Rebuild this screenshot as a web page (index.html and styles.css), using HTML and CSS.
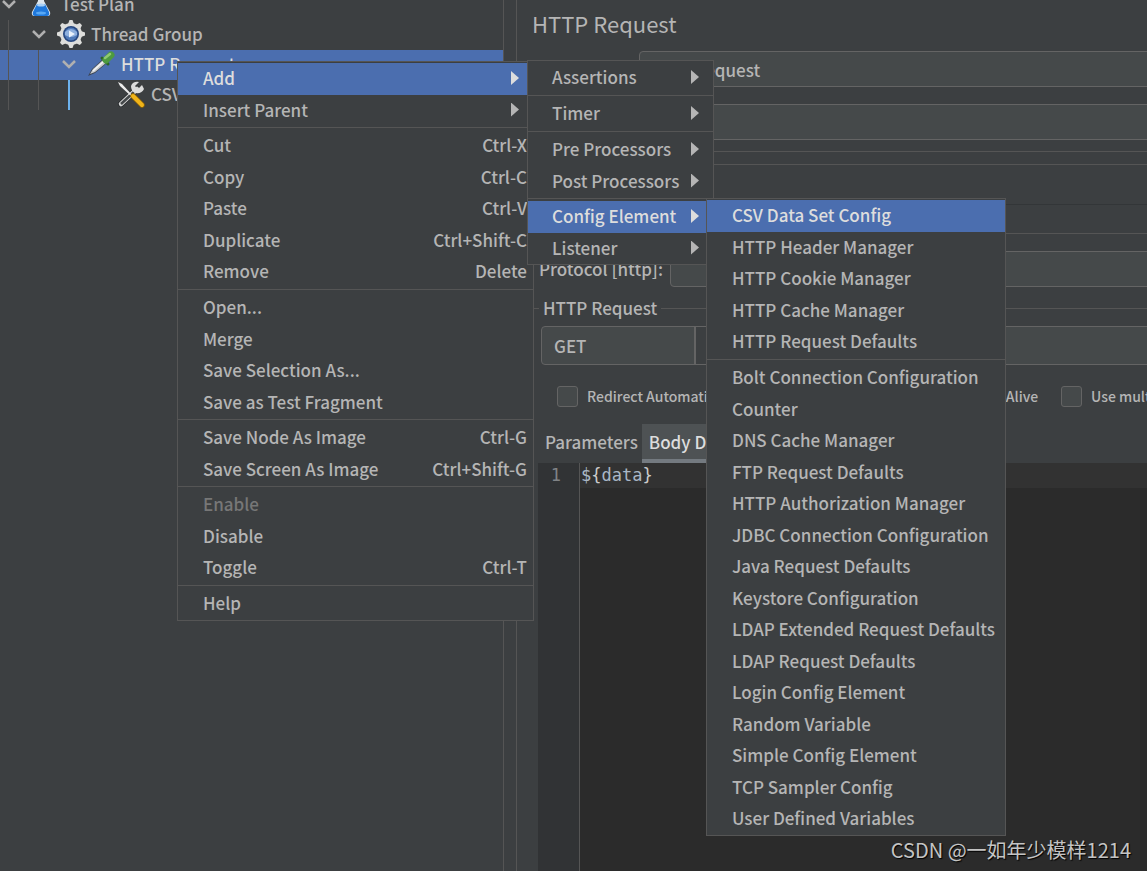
FILE: index.html
```
<!DOCTYPE html>
<html lang="en">
<head>
<meta charset="utf-8">
<title>HTTP Request</title>
<link rel="stylesheet" href="styles.css">
</head>
<body>
<div class="app">
  <nav class="tree-pane">
    <ul class="tree">
      <li class="node level-0">
        <svg class="chevron" viewBox="0 0 14 10"><path d="M1 2l6 6 6-6"/></svg>
        <svg class="node-icon" viewBox="0 0 28 28"><path d="M11 3h6v8l6 11q1 4-3 4H8q-4 0-3-4l6-11z" fill="#dce6ee"/><path d="M10 14h8l4 8q1 4-2 4H8q-3 0-2-4z" fill="#1f78dc"/><ellipse cx="14" cy="15" rx="4" ry="1.500" fill="#a9d0f5"/><ellipse cx="14" cy="23" rx="5" ry="1.500" fill="#58a8f4"/></svg>
        <span>Test Plan</span>
      </li>
      <li class="node level-1">
        <svg class="chevron" viewBox="0 0 14 10"><path d="M1 2l6 6 6-6"/></svg>
        <svg class="node-icon" viewBox="0 0 28 28"><g fill="#dededc"><circle cx="14" cy="14" r="11"/><g id="teeth"><path d="M11 4l1.500-4h3L17 4v20l-1.500 4h-3L11 24z"/><path d="M4 11l-4 1.500v3L4 17h20l4-1.500v-3L24 11z"/></g><use href="#teeth" transform="rotate(45 14 14)"/></g><circle cx="14" cy="14" r="8" fill="#27477f"/><circle cx="14" cy="14" r="6.500" fill="#4f79b8"/><path d="M8 12q6-6 12 0v3q-6 4-12 0z" fill="#8fb0de"/><path d="M12 10.500l6 3.500-6 3.500z" fill="#e9f1fb"/></svg>
        <span>Thread Group</span>
      </li>
      <li class="node level-2 selected">
        <svg class="chevron" viewBox="0 0 14 10"><path d="M1 2l6 6 6-6"/></svg>
        <svg class="node-icon" viewBox="0 0 28 28"><path d="M1 26l4-7L16 9l4 4L8 23z" fill="#3d4654"/><path d="M3 24l3-5L16 10l3 3L8 22z" fill="#c9cccf"/><path d="M6 21L17 11" stroke="#f5f5f5" stroke-width="1.500"/><path d="M15 8l6 6" stroke="#2c6427" stroke-width="3" stroke-linecap="round"/><path d="M19 10l5-5" stroke="#4d9a40" stroke-width="7" stroke-linecap="round"/><path d="M18 8l5-4" stroke="#8fc973" stroke-width="2.500" stroke-linecap="round"/></svg>
        <span>HTTP Request</span>
      </li>
      <li class="node level-3">
        <svg class="node-icon" viewBox="0 0 28 28"><path d="M4 24L20 9" stroke="#25282a" stroke-width="6" stroke-linecap="round"/><path d="M4 24L20 9" stroke="#d3d4d4" stroke-width="4.500" stroke-linecap="round"/><path d="M4 24L17 12" stroke="#44484a" stroke-width="2.500"/><path d="M25 5l-4 4-3-3 4-4q-6-1-8 4 0 5 4 7 7 1 9-4z" fill="#dcdcdc"/><path d="M1 2l4 2 11 12-1 1L3 6z" fill="#ececec"/><path d="M16 16l9 9" stroke="#8a6207" stroke-width="5.500" stroke-linecap="round"/><path d="M16 16l9 9" stroke="#f0b41a" stroke-width="4" stroke-linecap="round"/></svg>
        <span>CSV Data Set Config</span>
      </li>
    </ul>
  </nav>

  <main class="editor-pane">
    <h1 class="title">HTTP Request</h1>
    <input class="field name-field" aria-label="Name" value="HTTP Request">
    <input class="field comment-field" aria-label="Comments">
    <section class="config">
      <div class="config-tabs"></div>
      <div class="server">
        <label class="server-row"><span>Protocol [http]:</span><input class="field"></label>
      </div>
      <fieldset class="request">
        <legend>HTTP Request</legend>
        <div class="method-row">
          <select class="method" aria-label="Method"><option>GET</option></select>
          <input class="field path" aria-label="Path">
        </div>
        <div class="options">
          <label class="option"><input type="checkbox" class="check">Redirect Automatically</label>
          <label class="option keep-alive"><input type="checkbox" class="check">Use KeepAlive</label>
          <label class="option"><input type="checkbox" class="check">Use multipart/form-data</label>
        </div>
        <div class="tabs">
          <button class="tab">Parameters</button>
          <button class="tab active">Body Data</button>
        </div>
        <div class="code">
          <div class="gutter">1</div>
          <pre class="source"><code class="line">$<b>{</b>data<b>}</b></code></pre>
        </div>
      </fieldset>
    </section>
  </main>
</div>

<div class="menu menu-main">
  <div class="group">
    <button class="item open">Add<i class="arrow"></i></button>
    <button class="item">Insert Parent<i class="arrow"></i></button>
  </div>
  <div class="group">
    <button class="item">Cut<kbd>Ctrl-X</kbd></button>
    <button class="item">Copy<kbd>Ctrl-C</kbd></button>
    <button class="item">Paste<kbd>Ctrl-V</kbd></button>
    <button class="item">Duplicate<kbd>Ctrl+Shift-C</kbd></button>
    <button class="item">Remove<kbd>Delete</kbd></button>
  </div>
  <div class="group">
    <button class="item">Open...</button>
    <button class="item">Merge</button>
    <button class="item">Save Selection As...</button>
    <button class="item">Save as Test Fragment</button>
  </div>
  <div class="group">
    <button class="item">Save Node As Image<kbd>Ctrl-G</kbd></button>
    <button class="item">Save Screen As Image<kbd>Ctrl+Shift-G</kbd></button>
  </div>
  <div class="group">
    <button class="item" disabled>Enable</button>
    <button class="item">Disable</button>
    <button class="item">Toggle<kbd>Ctrl-T</kbd></button>
  </div>
  <div class="group">
    <button class="item">Help</button>
  </div>
</div>

<div class="menu menu-add">
  <div class="group">
    <button class="item">Assertions<i class="arrow"></i></button>
  </div>
  <div class="group">
    <button class="item">Timer<i class="arrow"></i></button>
  </div>
  <div class="group">
    <button class="item">Pre Processors<i class="arrow"></i></button>
    <button class="item">Post Processors<i class="arrow"></i></button>
  </div>
  <div class="group">
    <button class="item open">Config Element<i class="arrow"></i></button>
    <button class="item">Listener<i class="arrow"></i></button>
  </div>
</div>

<div class="menu menu-config">
  <div class="group">
    <button class="item open">CSV Data Set Config</button>
    <button class="item">HTTP Header Manager</button>
    <button class="item">HTTP Cookie Manager</button>
    <button class="item">HTTP Cache Manager</button>
    <button class="item">HTTP Request Defaults</button>
  </div>
  <div class="group">
    <button class="item">Bolt Connection Configuration</button>
    <button class="item">Counter</button>
    <button class="item">DNS Cache Manager</button>
    <button class="item">FTP Request Defaults</button>
    <button class="item">HTTP Authorization Manager</button>
    <button class="item">JDBC Connection Configuration</button>
    <button class="item">Java Request Defaults</button>
    <button class="item">Keystore Configuration</button>
    <button class="item">LDAP Extended Request Defaults</button>
    <button class="item">LDAP Request Defaults</button>
    <button class="item">Login Config Element</button>
    <button class="item">Random Variable</button>
    <button class="item">Simple Config Element</button>
    <button class="item">TCP Sampler Config</button>
    <button class="item">User Defined Variables</button>
  </div>
</div>

<div class="watermark">CSDN @一如年少模样1214</div>
</body>
</html>
```
FILE: styles.css
```
:root {
  --bg: #3c3f41;
  --field: #45494a;
  --line: #555555;
  --field-line: #646464;
  --text: #b5b5b5;
  --select: #4b6eaf;
}

* { box-sizing: border-box; }

body {
  margin: 0;
  background: var(--bg);
  color: var(--text);
  font: 500 17px/30px "Noto Sans CJK SC", "Noto Sans", sans-serif;
  overflow: hidden;
}

button, input, select { font: inherit; color: inherit; }

.app {
  display: grid;
  grid-template-columns: 504px minmax(0, 1fr);
  column-gap: 12px;
  height: 100vh;
  overflow: hidden;
}

/* test plan tree */
.tree-pane { border-right: 1px solid var(--line); }

.tree {
  margin: -10px 0 0;
  padding: 0;
  list-style: none;
}

.node {
  display: flex;
  align-items: center;
  height: 30px;
  padding-bottom: 2px;
  white-space: nowrap;
  background-repeat: no-repeat;
}

.node.selected { background-color: var(--select); color: #dddddd; }
.level-0 { padding-left: 2px; }
.level-1 { padding-left: 32px; }
.level-2 { padding-left: 62px; }
.level-3 { padding-left: 117px; }

.level-1 { background-image: linear-gradient(var(--line), var(--line)); background-position: 8px 0; background-size: 1px 30px; }
.level-2 { background-image: linear-gradient(var(--line), var(--line)), linear-gradient(var(--line), var(--line)); background-position: 8px 0, 38px 0; background-size: 1px 30px; }
.level-3 { background-image: linear-gradient(var(--line), var(--line)), linear-gradient(var(--line), var(--line)), linear-gradient(#6cb2ee, #6cb2ee); background-position: 8px 0, 38px 0, 68px 0; background-size: 1px 30px, 1px 30px, 2px 30px; }

.chevron {
  width: 14px;
  height: 10px;
  margin-right: 11px;
  fill: none;
  stroke: #b0b0b0;
  stroke-width: 2.5;
}

.node-icon { width: 28px; height: 28px; margin-right: 6px; }

/* sampler panel */
.editor-pane {
  display: flex;
  flex-direction: column;
  border-left: 1px solid var(--line);
}

.title {
  margin: 0 0 5px 15px;
  font-size: 22px;
  font-weight: 400;
  line-height: 46px;
}

.field {
  height: 36px;
  padding: 0 6px;
  border: 1px solid var(--field-line);
  border-radius: 4px;
  background: var(--field);
}

.name-field, .comment-field { margin: 0 -6px 17px 122px; }
.comment-field { margin-bottom: 11px; }

.config {
  display: flex;
  flex: 1;
  flex-direction: column;
  min-height: 0;
  margin-left: 16px;
  border-top: 1px solid var(--line);
}

.config-tabs {
  height: 55px;
  margin-top: 12px;
  border-top: 1px solid var(--line);
  border-bottom: 14px solid var(--bg);
  box-shadow: inset 0 -1px #333638;
}

.server { border-top: 1px solid var(--line); margin-top: 14px; padding-top: 17px; }
.server-row { display: flex; align-items: center; gap: 7px; padding-left: 6px; }
.server-row .field { flex: 1; margin-right: -6px; }

.request {
  display: flex;
  flex: 1;
  flex-direction: column;
  min-width: 0;
  min-height: 0;
  margin: 7px 0 0;
  padding: 4px 0 0;
  border: 0 solid var(--line);
  border-top-width: 1px;
}

.request legend { margin-left: 6px; padding: 0 4px; line-height: 28px; }

.method-row { display: flex; gap: 60px; padding-left: 8px; }

.method {
  width: 194px;
  height: 39px;
  padding: 0 12px;
  border: 1px solid var(--field-line);
  border-radius: 4px;
  appearance: none;
  background: linear-gradient(to right, var(--field) 152px, var(--field-line) 152px 154px, var(--bg) 154px);
}

.path { flex: 1; min-width: 0; height: 39px; margin-right: -6px; }

.options {
  display: flex;
  padding: 16px 0 13px 24px;
  white-space: nowrap;
  font-size: 14px;
}

.option { display: flex; align-items: center; gap: 9px; flex: none; width: 357px; }
.option.keep-alive { width: 147px; }

.check {
  width: 21px;
  height: 21px;
  margin: 0;
  border: 1px solid var(--field-line);
  border-radius: 3px;
  appearance: none;
  background: var(--field);
}

.tabs { display: flex; padding-left: 5px; }

.tab {
  height: 39px;
  padding: 0 4px 0 7px;
  border: 0;
  border-bottom: 4px solid transparent;
  background: none;
}

.tab.active { border-color: #747a80; background: #4e5254; color: #dddddd; }

.code {
  display: flex;
  flex: 1;
  margin-left: 5px;
  background: #2b2b2b;
  font: 17px/25px "DejaVu Sans Mono", monospace;
}

.gutter {
  width: 42px;
  padding-right: 18px;
  border-right: 1px solid var(--line);
  background: #313335;
  color: #808386;
  text-align: right;
}

.source { flex: 1; margin: 0; font: inherit; color: #a9b7c6; }
.line { display: block; padding-left: 1px; font: inherit; background: #323232; }
.line b { font-weight: 400; color: #cccccc; }

/* popup menus */
.menu {
  position: absolute;
  padding-top: 1px;
  border: 1px solid var(--line);
  background: var(--bg);
}

.menu-main { left: 177px; top: 61px; width: 357px; }
.menu-add { left: 527px; top: 60px; width: 187px; }
.menu-config { left: 706px; top: 198px; width: 300px; }

.group + .group {
  margin-top: 1px;
  padding-top: 2px;
  border-top: 1px solid var(--line);
}

.item {
  display: flex;
  align-items: center;
  width: 100%;
  height: 32px;
  padding: 0 6px 2px 25px;
  border: 0;
  background: none;
  line-height: 30px;
  white-space: nowrap;
  text-align: left;
}

.menu-add .item { padding-left: 24px; }
.item:nth-child(even) { height: 31px; }
.item:disabled { color: #777777; }
.item.open { background: var(--select); color: #dddddd; }
.item kbd { margin-left: auto; font: inherit; }

.arrow {
  width: 8px;
  height: 14px;
  margin: 0 8px 0 auto;
  background: currentColor;
  clip-path: polygon(0 0, 100% 50%, 0 100%);
}

.watermark {
  position: absolute;
  right: 16px;
  bottom: 6px;
  color: #c4c4c4;
  font-size: 20px;
  font-weight: 400;
  text-shadow: 1px 1px 1px #000000;
}
```
